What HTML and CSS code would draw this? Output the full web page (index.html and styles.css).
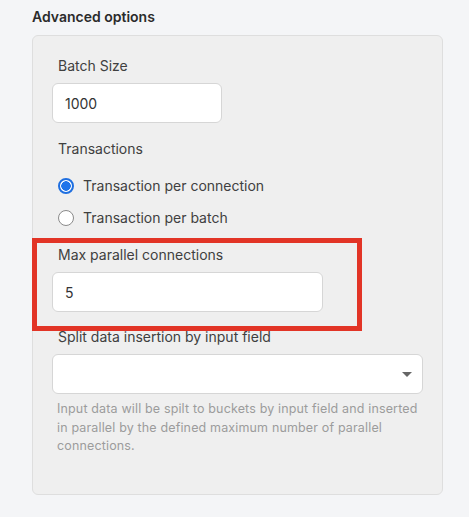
FILE: index.html
```html
<!DOCTYPE html>
<html>
    <head>
        <title>Advanced options</title>
        <link rel="stylesheet" href="styles.css">
    </head>

    <body>
        <div id="content">
            <div class="section-title">Advanced options</div>
            <div class="panel">
                <label class="field-label">Batch Size</label>
                <input class="text-input batch" type="text" value="1000">

                <label class="field-label transactions">Transactions</label>
                <div class="radio-group">
                    <label class="radio-row">
                        <input type="radio" name="tx" checked>
                        <span>Transaction per connection</span>
                    </label>
                    <label class="radio-row">
                        <input type="radio" name="tx">
                        <span>Transaction per batch</span>
                    </label>
                </div>

                <label class="field-label">Max parallel connections</label>
                <input class="text-input parallel" type="text" value="5">

                <label class="field-label split">Split data insertion by input field</label>
                <div class="select-box">
                    <span class="caret"></span>
                </div>
                <p class="help">Input data will be spilt to buckets by input field and inserted in parallel by the defined maximum number of parallel connections.</p>

                <div class="highlight"></div>
            </div>
        </div>
    </body>
</html>
```

FILE: styles.css
```css
body {
    margin: 0;
    font-family: Inter, "Noto Sans", sans-serif;
    background-color: #f4f5f7;
    color: #333;
}

#content {
    padding: 7px 26px 0 32px;
}

.section-title {
    font-size: 14px;
    font-weight: 600;
    line-height: 20px;
    color: #2b2b2b;
    margin-bottom: 8px;
}

.panel {
    position: relative;
    width: 371px;
    padding: 20px 19px 38px 19px;
    background-color: #efefef;
    border: 1px solid #dedede;
    border-radius: 6px;
}

.field-label {
    display: block;
    padding-left: 6px;
    font-size: 14px;
    line-height: 20px;
    color: #404040;
    margin-bottom: 7px;
}

.text-input {
    display: block;
    box-sizing: border-box;
    height: 40px;
    padding: 0 12px;
    font-family: inherit;
    font-size: 14px;
    color: #333;
    background: #fff;
    border: 1px solid #d6d6d6;
    border-radius: 6px;
    outline: none;
    margin: 0;
}

.batch {
    width: 170px;
    margin-bottom: 16px;
}

.parallel {
    width: 271px;
    margin-bottom: 15px;
}

.transactions {
    margin-bottom: 17px;
}

.radio-group {
    display: flex;
    flex-direction: column;
    gap: 12px;
    margin-bottom: 17px;
}

.radio-row {
    display: flex;
    align-items: center;
    gap: 9px;
    padding-left: 6px;
    font-size: 14px;
    line-height: 20px;
    color: #404040;
}

.radio-row input {
    appearance: none;
    width: 16px;
    height: 16px;
    margin: 0;
    border: 1px solid #8a8a8a;
    border-radius: 50%;
    background: #fff;
}

.radio-row input:checked {
    border: 2px solid #1f6fe0;
    background: radial-gradient(circle, #1f74ea 0 4.5px, #fff 5px);
}

.select-box {
    position: relative;
    box-sizing: border-box;
    height: 40px;
    background: #fff;
    border: 1px solid #d6d6d6;
    border-radius: 6px;
}

.caret {
    position: absolute;
    right: 10px;
    top: 17px;
    border-left: 5px solid transparent;
    border-right: 5px solid transparent;
    border-top: 5px solid #666;
}

.help {
    margin: 6px 0 0 0;
    padding-left: 5px;
    font-size: 12.5px;
    letter-spacing: 0.15px;
    line-height: 18.5px;
    color: #9c9c9c;
}

/* red frame drawn around the parallel connections field */
.highlight {
    position: absolute;
    left: -1px;
    top: 202px;
    width: 320px;
    height: 83px;
    border: 5px solid #e23426;
}
```
